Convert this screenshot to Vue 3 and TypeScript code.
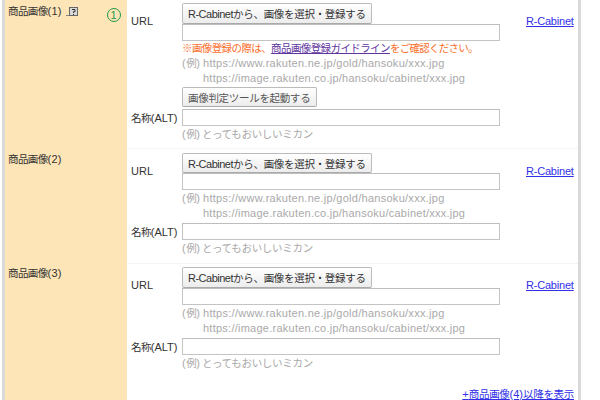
<script setup lang="ts">
interface Row { id: number; height: number; top: number; labelTop: number; extra: boolean }
const rows: Row[] = [
  { id: 1, height: 149, top: 3, labelTop: 4, extra: true },
  { id: 2, height: 115, top: 4, labelTop: 3, extra: false },
  { id: 3, height: 136, top: 3, labelTop: 2, extra: false },
]
</script>

<template>
  <div class="page">
    <div class="table">
      <div v-for="r in rows" :key="r.id" class="row" :class="{ last: r.id === 3 }" :style="{ height: r.height + 'px' }">
        <div class="label" :style="{ paddingTop: r.labelTop + 'px' }">
          <div class="label-head">
            <span class="label-text"><span class="cjk">商品画像</span>({{ r.id }})</span>
            <svg v-if="r.extra" class="help" width="12" height="10" viewBox="0 0 12 10">
              <path d="M0 8.5h3" stroke="#888" fill="none" />
              <rect x="3.5" y="0.5" width="8" height="8" fill="#d8d8d8" stroke="#666" />
              <path d="M6 2.5h3v2.2H7.5V6" stroke="#333" fill="none" />
              <rect x="7" y="7" width="1" height="1" fill="#333" />
            </svg>
            <span v-if="r.extra" class="step">1</span>
          </div>
        </div>
        <div class="body" :style="{ paddingTop: r.top + 'px' }">
          <div class="line">
            <span class="key">URL</span>
            <div class="fields">
              <button class="btn" :class="{ compact: r.id === 2 }" type="button"><span class="latin">R-Cabinet</span><span class="cjk loose">から、画像を選択・登録する</span></button>
              <input class="input" type="text" />
              <div v-if="r.extra" class="note">
                <span class="cjk">※画像登録の際は、</span><a class="guide cjk" href="#">商品画像登録ガイドライン</a><span class="cjk kana">をご確認ください。</span>
              </div>
              <div class="hint first"><span class="paren">(<span class="cjk">例</span>)</span><span class="url first-url">https://www.rakuten.ne.jp/gold/hansoku/xxx.jpg</span></div>
              <div class="hint indent"><span class="url">https://image.rakuten.co.jp/hansoku/cabinet/xxx.jpg</span></div>
              <button v-if="r.extra" class="btn tool" type="button"><span class="cjk loose">画像判定ツールを起動する</span></button>
            </div>
            <a class="cabinet" href="#">R-Cabinet</a>
          </div>
          <div class="line alt">
            <span class="key"><span class="cjk">名称</span>(ALT)</span>
            <div class="fields">
              <input class="input" type="text" />
              <div class="hint"><span class="paren">(<span class="cjk">例</span>)</span><span class="cjk loose">とってもおいしいミカン</span></div>
            </div>
          </div>
          <div v-if="r.id === 3" class="more"><a href="#">+<span class="cjk loose">商品画像</span>(4)<span class="cjk loose">以降を表示</span></a></div>
        </div>
      </div>
    </div>
  </div>
</template>

<style>
html, body { margin: 0; background: #fff; overflow: hidden; }
</style>

<style scoped>
.page {
  width: 600px;
  height: 400px;
  overflow: hidden;
  box-sizing: border-box;
  padding-left: 2px;
  font-family: "Liberation Sans", "Noto Sans CJK JP", sans-serif;
  font-size: 11px;
  color: #333;
}
.cjk { font-size: 10.5px; letter-spacing: -0.6px; }
.cjk.kana { letter-spacing: -0.75px; }
.cjk.loose { letter-spacing: -0.3px; }
.paren { display: inline-block; width: 20px; letter-spacing: 0.6px; }
.latin { letter-spacing: -0.5px; }
.url { letter-spacing: 0.25px; }
.first-url { margin-left: 1px; letter-spacing: 0.28px; }
.table {
  width: 579px;
  box-sizing: border-box;
  border-left: 3px solid #d9d9d9;
  border-right: 3px solid #d9d9d9;
}
.row {
  display: flex;
  box-sizing: border-box;
  border-bottom: 1px solid #f4f4f4;
}
.row.last { border-bottom: 0; }
.label {
  width: 122px;
  flex: none;
  margin-bottom: -1px;
  background: #fee5b7;
  box-sizing: border-box;
  padding-left: 3px;
}
.label-head { display: flex; align-items: flex-start; line-height: 14px; }
.label-text { color: #333; letter-spacing: 0.2px; white-space: nowrap; }
.help { margin: 3px 0 0 4px; }
.step {
  box-sizing: border-box;
  width: 14px;
  height: 14px;
  margin: 4px 0 0 29px;
  border: 1px solid #1e9a4a;
  border-radius: 50%;
  color: #1e9a4a;
  font-size: 11px;
  line-height: 12px;
  text-align: center;
}
.body { flex: 1; position: relative; min-width: 0; box-sizing: border-box; }
.line { display: flex; align-items: flex-start; }
.line.alt { margin-top: 2px; }
.key {
  width: 51px;
  flex: none;
  margin-left: 4px;
  line-height: 14px;
  padding-top: 11px;
  color: #333;
  white-space: nowrap;
}
.alt .key { padding-top: 2px; }
.fields { width: 318px; flex: none; display: flex; flex-direction: column; align-items: flex-start; }
.btn {
  height: 21px;
  box-sizing: border-box;
  padding: 0 5px;
  border: 1px solid #bbb;
  border-bottom-color: #aaa;
  border-radius: 2px;
  background: linear-gradient(#fff, #ececec);
  font: inherit;
  color: #333;
  white-space: nowrap;
  width: 190px;
  text-align: left;
}
.btn.compact { height: 20px; }
.btn.tool { width: 135px; color: #555; margin-top: 1px; height: 20px; }
.input {
  display: block;
  width: 318px;
  height: 17px;
  box-sizing: border-box;
  margin: 0;
  padding: 0;
  border: 1px solid #c4c4c4;
  border-top-color: #bdbdbd;
  background: #fff;
}
.note { color: #fb6e2c; line-height: 15px; height: 15px; white-space: nowrap; }
.guide { color: #5f359f; text-decoration: underline; }
.hint { color: #a9a9a9; line-height: 15px; white-space: nowrap; }
.hint.first { margin-top: 1px; }
.note + .hint.first { margin-top: 0; }
.alt .hint { margin-top: 1px; }
.indent { padding-left: 21px; }
.cabinet {
  margin-left: 26px;
  margin-top: 11px;
  line-height: 14px;
  color: #3030e8;
  text-decoration: underline;
  white-space: nowrap;
  letter-spacing: -0.2px;
}
.more {
  position: absolute;
  right: 4px;
  bottom: -1px;
  line-height: 14px;
  white-space: nowrap;
}
.more a { color: #3030e8; text-decoration: underline; }
</style>
